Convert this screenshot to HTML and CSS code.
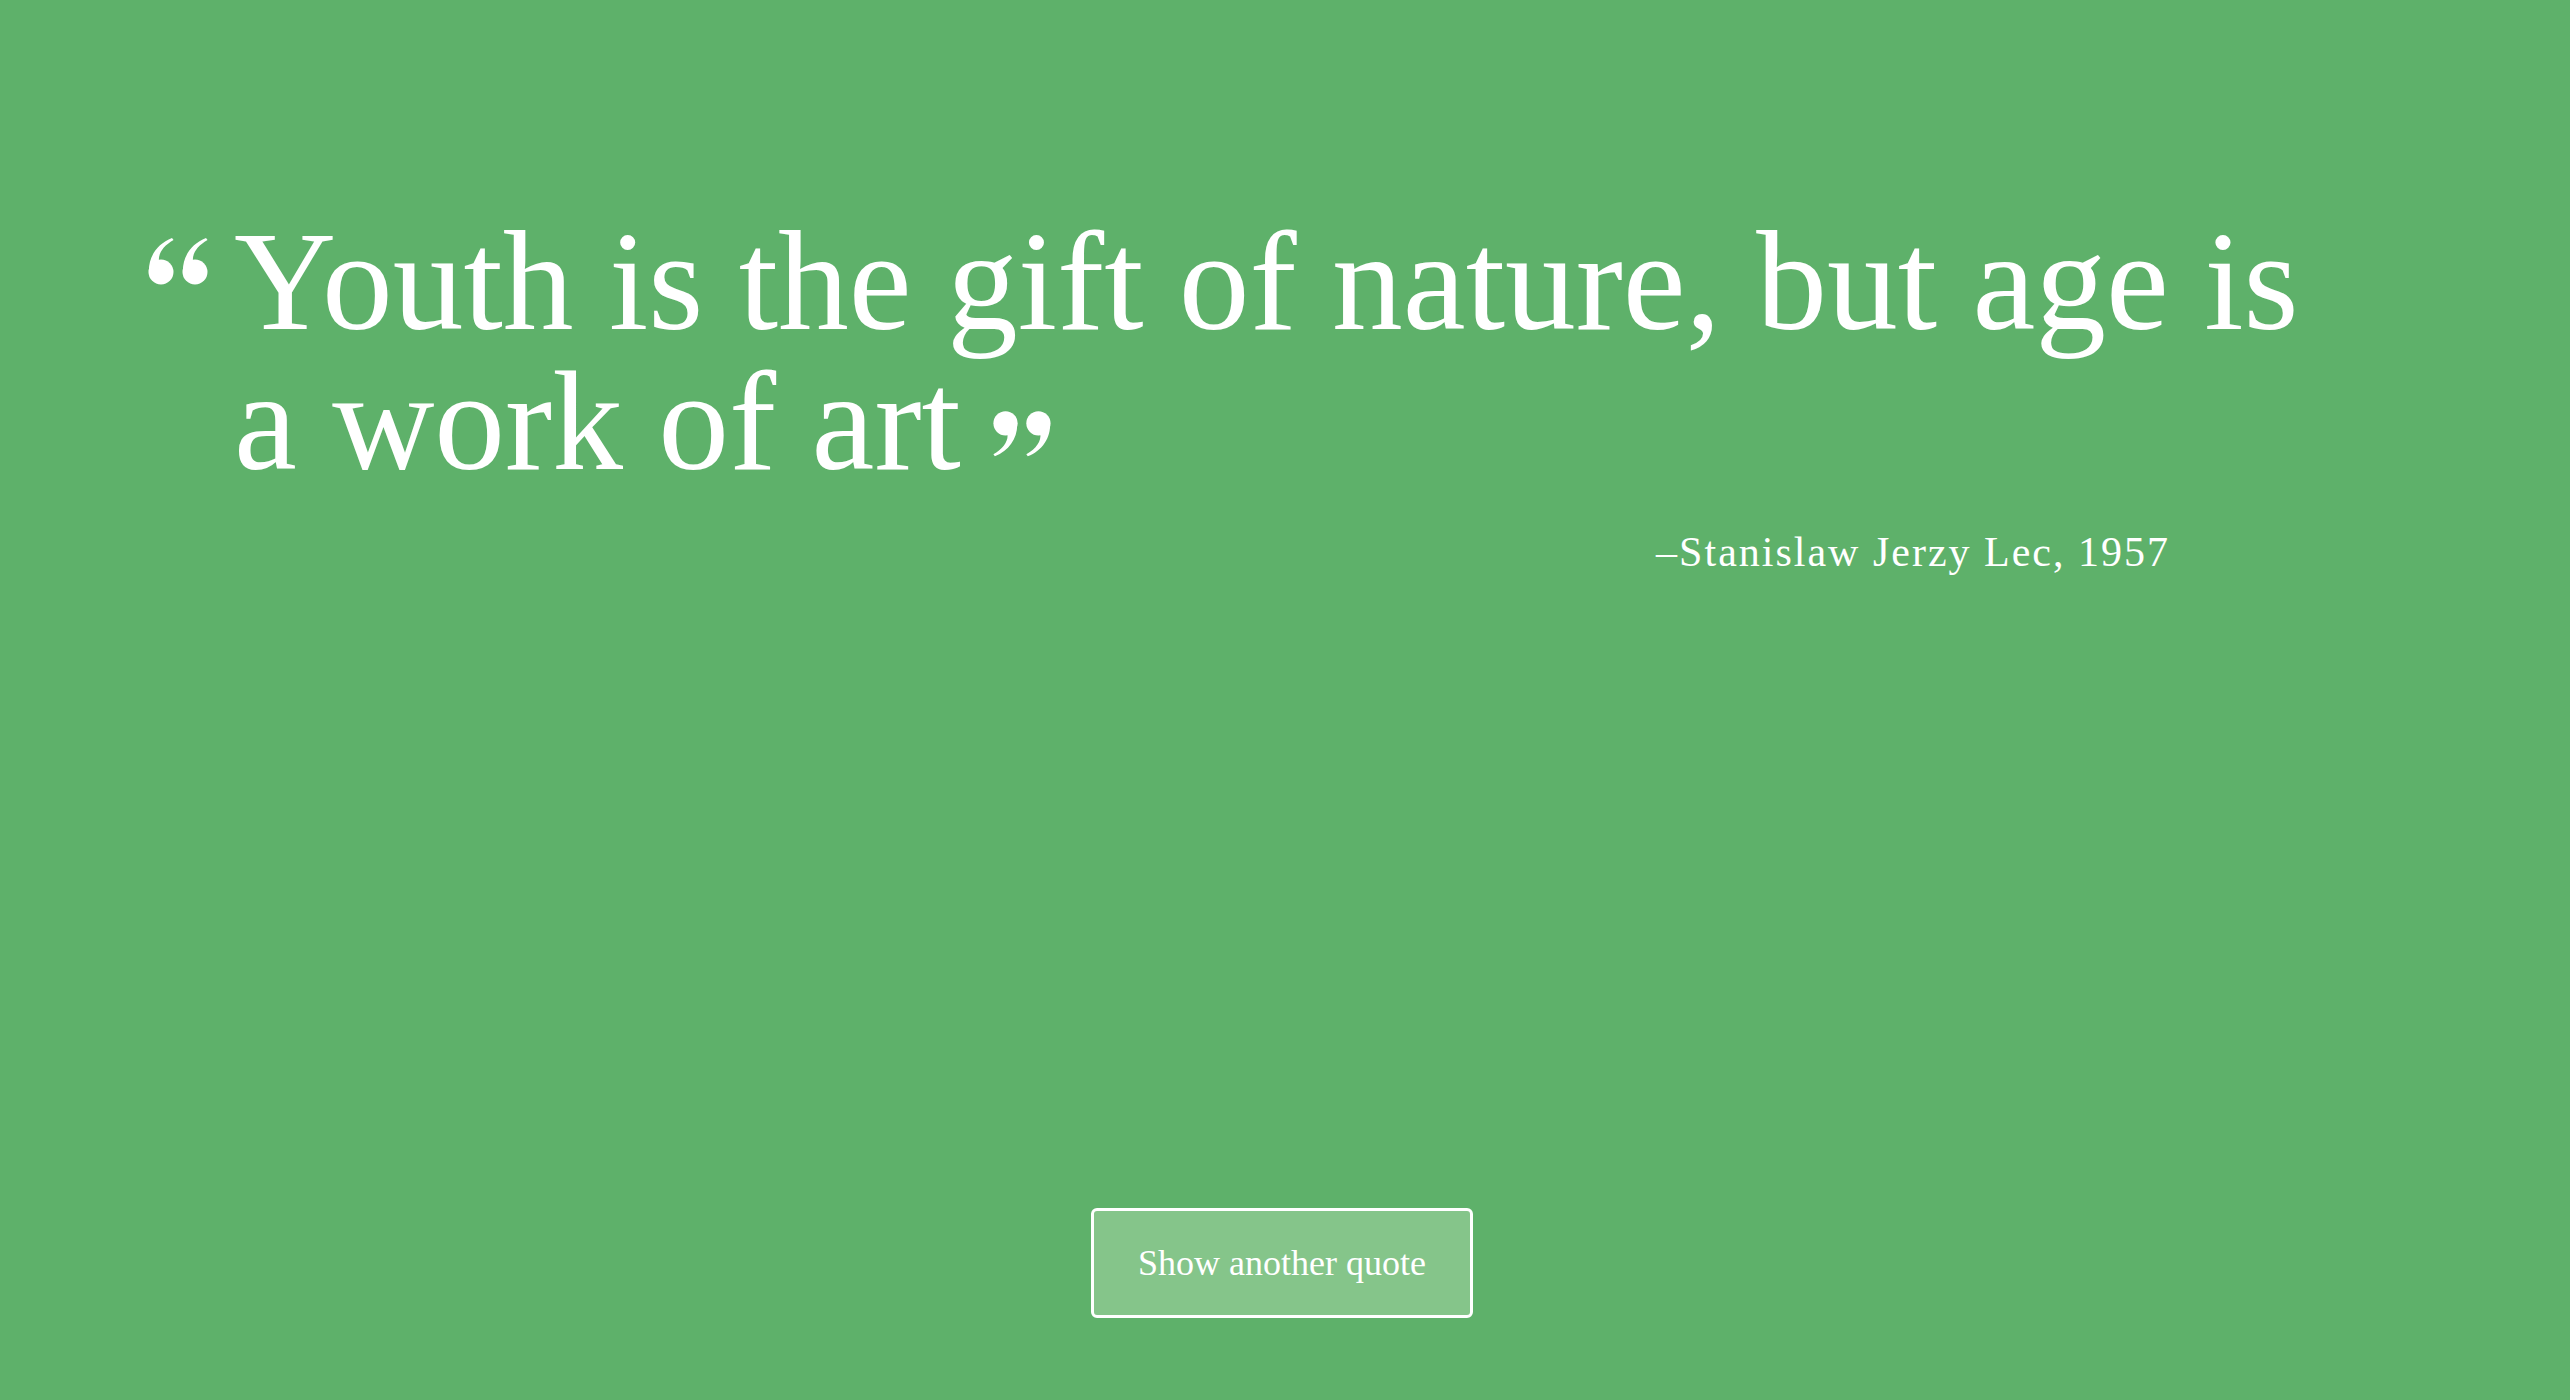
FILE: index.html
```html
<!DOCTYPE html>
<html lang="en">
<head>
<meta charset="utf-8">
<title>Random Quote</title>
<link rel="stylesheet" href="styles.css">
</head>
<body>
<main class="page">
  <section class="quote-box">
    <blockquote class="quote">
      <svg class="q-open" viewBox="0 0 62 48" aria-hidden="true">
        <g fill="#fff">
          <circle cx="13" cy="35" r="12.5"/>
          <path d="M1 36 C0 20 9 7 24 1 L25.5 3 C15 9 10 17 11 24 Z"/>
          <g transform="translate(34 0)">
            <circle cx="13" cy="35" r="12.5"/>
            <path d="M1 36 C0 20 9 7 24 1 L25.5 3 C15 9 10 17 11 24 Z"/>
          </g>
        </g>
      </svg>
      <p class="quote-text">Youth is the gift of nature, but age is a work of art<svg class="q-close" viewBox="0 0 62 48" aria-hidden="true">
        <g fill="#fff" transform="rotate(180 31 24)">
          <circle cx="13" cy="35" r="12.5"/>
          <path d="M1 36 C0 20 9 7 24 1 L25.5 3 C15 9 10 17 11 24 Z"/>
          <g transform="translate(34 0)">
            <circle cx="13" cy="35" r="12.5"/>
            <path d="M1 36 C0 20 9 7 24 1 L25.5 3 C15 9 10 17 11 24 Z"/>
          </g>
        </g>
      </svg></p>
    </blockquote>
    <p class="author">&ndash;Stanislaw Jerzy Lec, 1957</p>
  </section>
  <div class="actions">
    <button class="btn" type="button">Show another quote</button>
  </div>
</main>
</body>
</html>
```
FILE: styles.css
```css
html, body {
  margin: 0;
  padding: 0;
}
body {
  background: #5eb16a;
  color: #fff;
  font-family: "Liberation Serif", "Times New Roman", serif;
}
.page {
  height: 100vh;
  display: flex;
  flex-direction: column;
  box-sizing: border-box;
}
.quote-box {
  padding: 212px 0 0 148px;
}
.quote {
  position: relative;
  margin: 0;
  padding-left: 86px;
}
.q-open {
  position: absolute;
  left: 0;
  top: 25px;
  width: 62px;
  height: 48px;
}
.quote-text {
  margin: 0;
  max-width: 2140px;
  font-size: 141.5px;
  line-height: 140px;
  font-weight: 400;
}
.q-close {
  display: inline-block;
  width: 60px;
  height: 48px;
  margin-left: 30px;
  vertical-align: 11px;
}
.author {
  margin: 34px 0 0;
  padding-right: 400px;
  text-align: right;
  font-size: 42px;
  line-height: 52px;
  letter-spacing: 2px;
}
.actions {
  margin-top: auto;
  padding-bottom: 82px;
  display: flex;
  justify-content: center;
}
.btn {
  width: 382px;
  height: 110px;
  margin-right: 6px;
  box-sizing: border-box;
  border: 3px solid #fff;
  border-radius: 6px;
  background: #85c58a;
  color: #fff;
  font-family: "Liberation Serif", "Times New Roman", serif;
  font-size: 36px;
  cursor: pointer;
}
```
